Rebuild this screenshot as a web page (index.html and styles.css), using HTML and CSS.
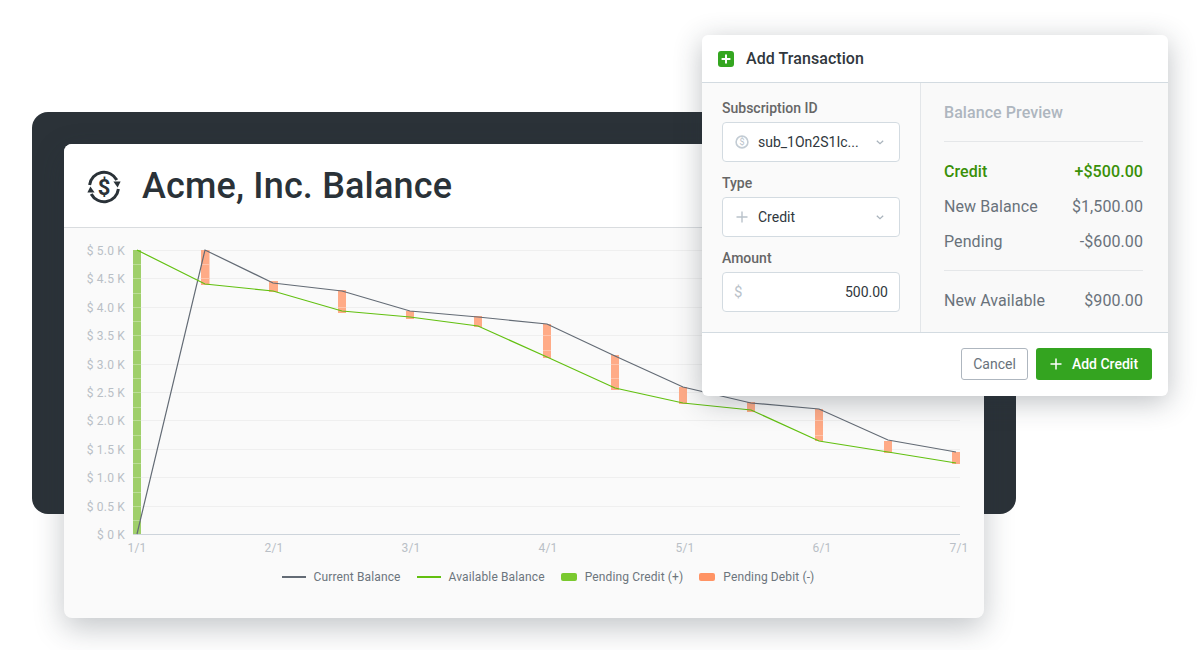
FILE: index.html
```html
<!DOCTYPE html>
<html>
  <head>
    <title>Acme, Inc. Balance</title>
    <meta name="viewport" content="width=device-width">
    <link rel="stylesheet" href="styles.css">
  </head>
  <body>
    <div class="stage">
      <div class="panel">
        <div class="card">
          <div class="card-head">
            <svg class="head-icon" width="34" height="34" viewBox="0 0 34 34">
              <path class="ring" d="M2.6 15A14.5 14.5 0 0 1 29.8 10"/>
              <path class="ring" d="M31.4 19A14.5 14.5 0 0 1 4.2 24"/>
              <polygon class="ring-head" points="26.4,11.6 33.6,11.6 30.6,17.4"/>
              <polygon class="ring-head" points="0.4,22.4 7.6,22.4 3.4,16.6"/>
              <text class="ring-sign" x="17" y="24.6">$</text>
            </svg>
            <h1>Acme, Inc. Balance</h1>
          </div>
          <div class="card-body">
            <svg class="chart" width="920" height="328" viewBox="64 228 920 328">
              <g class="grid">
                <line x1="133" x2="960" y1="250.5" y2="250.5"/>
                <line x1="133" x2="960" y1="278.5" y2="278.5"/>
                <line x1="133" x2="960" y1="307.5" y2="307.5"/>
                <line x1="133" x2="960" y1="335.5" y2="335.5"/>
                <line x1="133" x2="960" y1="364.5" y2="364.5"/>
                <line x1="133" x2="960" y1="392.5" y2="392.5"/>
                <line x1="133" x2="960" y1="420.5" y2="420.5"/>
                <line x1="133" x2="960" y1="449.5" y2="449.5"/>
                <line x1="133" x2="960" y1="477.5" y2="477.5"/>
                <line x1="133" x2="960" y1="506.5" y2="506.5"/>
              </g>
              <line class="axis" x1="133" x2="960" y1="534.5" y2="534.5"/>
              <g class="y-labels">
                <text x="125" y="255">$ 5.0 K</text>
                <text x="125" y="283">$ 4.5 K</text>
                <text x="125" y="312">$ 4.0 K</text>
                <text x="125" y="340">$ 3.5 K</text>
                <text x="125" y="369">$ 3.0 K</text>
                <text x="125" y="397">$ 2.5 K</text>
                <text x="125" y="425">$ 2.0 K</text>
                <text x="125" y="454">$ 1.5 K</text>
                <text x="125" y="482">$ 1.0 K</text>
                <text x="125" y="511">$ 0.5 K</text>
                <text x="125" y="539">$ 0 K</text>
              </g>
              <g class="x-labels">
                <text x="137" y="552">1/1</text>
                <text x="274" y="552">2/1</text>
                <text x="411" y="552">3/1</text>
                <text x="548" y="552">4/1</text>
                <text x="685" y="552">5/1</text>
                <text x="822" y="552">6/1</text>
                <text x="959" y="552">7/1</text>
              </g>
              <rect class="bar-credit" x="133" y="250" width="8" height="284"/>
              <g class="bar-debit">
                <rect x="201" y="250" width="8.5" height="35"/>
                <rect x="269" y="281" width="9" height="11"/>
                <rect x="338" y="290" width="8" height="23"/>
                <rect x="406" y="311" width="8" height="8"/>
                <rect x="474" y="316" width="8" height="11"/>
                <rect x="543" y="324" width="8" height="34"/>
                <rect x="611" y="355" width="8" height="35"/>
                <rect x="679" y="387" width="8" height="17"/>
                <rect x="747" y="402" width="8" height="10"/>
                <rect x="815" y="409" width="8" height="32"/>
                <rect x="884" y="441" width="8" height="12"/>
                <rect x="952" y="452" width="8" height="12"/>
              </g>
              <path class="bar-lines" d="M133 264.5h8M133 278.5h8M133 293.5h8M133 307.5h8M133 321.5h8M133 335.5h8M133 350.5h8M133 364.5h8M133 378.5h8M133 392.5h8M133 407.5h8M133 420.5h8M133 435.5h8M133 449.5h8M133 463.5h8M133 477.5h8M133 492.5h8M133 506.5h8M133 520.5h8M201 264.5h8M201 278.5h8M338 307.5h8M543 335.5h8M543 350.5h8M611 364.5h8M611 378.5h8M815 420.5h8M815 435.5h8"/>
              <polyline class="line-current" points="137,534 205,250 273,283 342,291 410,311 478,317 547,324 615,356 683,387 751,403 819,409 888,440 956,452"/>
              <polyline class="line-available" points="137,250 205,284 273,291 342,311 410,317 478,326 547,357 615,388 683,403 751,410 819,441 888,452 956,463"/>
            </svg>
            <div class="legend">
              <div class="legend-item"><span class="swatch swatch-current"></span>Current Balance</div>
              <div class="legend-item"><span class="swatch swatch-available"></span>Available Balance</div>
              <div class="legend-item"><span class="chip chip-credit"></span>Pending Credit (+)</div>
              <div class="legend-item"><span class="chip chip-debit"></span>Pending Debit (-)</div>
            </div>
          </div>
        </div>
      </div>

      <div class="modal">
        <div class="modal-head">
          <svg width="16" height="16" viewBox="0 0 16 16">
            <rect width="16" height="16" rx="3" fill="#34a620"/>
            <path d="M8 3.6v8.8M3.6 8h8.8" stroke="#fff" stroke-width="2"/>
          </svg>
          <span>Add Transaction</span>
        </div>
        <div class="modal-body">
          <div class="form-col">
            <label>Subscription ID</label>
            <div class="field">
              <svg class="field-icon" width="14" height="14" viewBox="0 0 14 14">
                <circle cx="7" cy="7" r="5.9" fill="none" stroke="#c3ccd4" stroke-width="1.6"/>
                <text class="coin-sign" x="7" y="10">$</text>
              </svg>
              <span class="field-text">sub_1On2S1Ic...</span>
              <svg class="chevron" width="8" height="5" viewBox="0 0 8 5"><path d="M.8.8L4 3.8L7.2.8"/></svg>
            </div>
            <label>Type</label>
            <div class="field">
              <svg class="field-icon" width="14" height="14" viewBox="0 0 14 14"><path d="M7 1.5v11M1.5 7h11" stroke="#b9c2ca" stroke-width="1.4"/></svg>
              <span class="field-text">Credit</span>
              <svg class="chevron" width="8" height="5" viewBox="0 0 8 5"><path d="M.8.8L4 3.8L7.2.8"/></svg>
            </div>
            <label>Amount</label>
            <div class="field field-amount">
              <span class="dollar">$</span>
              <span class="amount">500.00</span>
            </div>
          </div>
          <div class="preview-col">
            <h2>Balance Preview</h2>
            <div class="preview-group">
              <div class="row row-credit"><span>Credit</span><span>+$500.00</span></div>
              <div class="row"><span>New Balance</span><span>$1,500.00</span></div>
              <div class="row"><span>Pending</span><span>-$600.00</span></div>
            </div>
            <div class="row row-total"><span>New Available</span><span>$900.00</span></div>
          </div>
        </div>
        <div class="modal-foot">
          <div class="btn btn-cancel">Cancel</div>
          <div class="btn btn-add">
            <svg width="12" height="12" viewBox="0 0 12 12"><path d="M6 .5v11M.5 6h11" stroke="#fff" stroke-width="1.5"/></svg>
            <span>Add Credit</span>
          </div>
        </div>
      </div>
    </div>
  </body>
</html>
```

FILE: styles.css
```css
* { margin: 0; padding: 0; box-sizing: border-box; }
body {
  font-family: Roboto, sans-serif;
  background-color: #fff;
  overflow: hidden;
}

.stage {
  position: relative;
  width: 1200px;
  height: 650px;
  padding: 112px 0 0 32px;
}

.panel {
  width: 984px;
  height: 402px;
  padding: 32px;
  background-color: #2b3238;
  border-radius: 16px;
}

.card {
  width: 920px;
  height: 474px;
  background-color: #fafafa;
  border-radius: 8px;
  box-shadow: 0 10px 30px rgba(40, 50, 60, .28);
  overflow: hidden;
}

.card-head {
  display: flex;
  align-items: center;
  gap: 21px;
  height: 84px;
  padding-left: 23px;
  background-color: #fff;
  border-bottom: 1px solid #d9dcdf;
}
.card-head h1 {
  font-size: 36px;
  font-weight: 500;
  letter-spacing: .17px;
  color: #2a3238;
}
.head-icon { flex: none; margin-top: 2px; }
.ring {
  fill: none;
  stroke: #2a3238;
  stroke-width: 3;
}
.ring-head { fill: #2a3238; }
.ring-sign {
  font-size: 22px;
  font-weight: 700;
  fill: #2a3238;
  text-anchor: middle;
}

.chart { display: block; }
.grid line { stroke: #efefef; }
.axis { stroke: #cdd4db; }
.y-labels text {
  font-size: 12px;
  letter-spacing: .2px;
  fill: #b9bfc6;
  text-anchor: end;
}
.x-labels text {
  font-size: 12px;
  letter-spacing: .2px;
  fill: #b9bfc6;
  text-anchor: middle;
}
.bar-credit { fill: #9fcf6a; }
.bar-debit rect { fill: #ffab87; }
.bar-lines {
  stroke: #fff;
  stroke-opacity: .3;
  fill: none;
}
.line-current {
  fill: none;
  stroke: #636b75;
  stroke-width: 1.2;
}
.line-available {
  fill: none;
  stroke: #62c010;
  stroke-width: 1.2;
}

.legend {
  display: flex;
  justify-content: center;
  gap: 16px;
  padding: 13px 0 0 48px;
}
.legend-item {
  display: flex;
  align-items: center;
  gap: 8px;
  font-size: 12px;
  line-height: 16px;
  letter-spacing: .13px;
  color: #6c757d;
}
.swatch {
  width: 24px;
  height: 2px;
}
.swatch-current { background-color: #636b75; }
.swatch-available { background-color: #62c010; }
.chip {
  width: 16px;
  height: 8px;
  border-radius: 2px;
}
.chip-credit { background-color: #7ac92f; }
.chip-debit { background-color: #ff9364; }

.modal {
  position: absolute;
  left: 702px;
  top: 35px;
  width: 466px;
  height: 361px;
  display: flex;
  flex-direction: column;
  background-color: #fff;
  border-radius: 6px;
  box-shadow: 0 6px 28px rgba(40, 50, 60, .3);
  overflow: hidden;
}

.modal-head {
  display: flex;
  align-items: center;
  gap: 12px;
  flex: none;
  height: 48px;
  padding-left: 16px;
  font-size: 16px;
  font-weight: 500;
  letter-spacing: .07px;
  color: #30373d;
  border-bottom: 1px solid #d3dbe1;
}

.modal-body {
  display: flex;
  flex: none;
  height: 250px;
  background-color: #f9f9f9;
  border-bottom: 1px solid #d3dbe1;
}

.form-col {
  width: 219px;
  padding: 17px 20px 0;
  border-right: 1px solid #e3e6e9;
  background-color: #fafafa;
}
.form-col label {
  display: block;
  height: 22px;
  font-size: 14px;
  line-height: 16px;
  font-weight: 500;
  color: #666;
}
.field {
  display: flex;
  align-items: center;
  width: 178px;
  height: 40px;
  margin-bottom: 13px;
  padding: 0 12px;
  background-color: #fff;
  border: 1px solid #d3dbe1;
  border-radius: 4px;
  font-size: 14px;
  color: #30373d;
}
.field-icon { flex: none; margin-right: 9px; }
.coin-sign {
  font-size: 9px;
  fill: #b9c2ca;
  text-anchor: middle;
}
.field-text { flex: 1; }
.chevron {
  flex: none;
  margin-right: 3px;
  fill: none;
  stroke: #a9b3bc;
  stroke-width: 1.2;
}
.field-amount { justify-content: space-between; padding: 0 11px; }
.dollar { font-size: 15px; color: #b9c2ca; }

.preview-col {
  flex: 1;
  padding: 20px 25px 0 23px;
  color: #69727b;
}
.preview-col h2 {
  height: 39px;
  font-size: 16px;
  line-height: 19px;
  font-weight: 500;
  letter-spacing: .07px;
  color: #aeb6bf;
  border-bottom: 1px solid #e5e7e9;
}
.preview-group {
  padding: 12px 0 11px;
  border-bottom: 1px solid #e5e7e9;
}
.row {
  display: flex;
  justify-content: space-between;
  align-items: center;
  height: 35px;
  font-size: 16px;
  letter-spacing: .08px;
}
.row-credit {
  font-weight: 500;
  color: #3a9008;
}
.row-total { margin-top: 12px; }

.modal-foot {
  display: flex;
  justify-content: flex-end;
  gap: 8px;
  padding: 15px 16px 0;
}
.btn {
  display: flex;
  align-items: center;
  justify-content: center;
  height: 32px;
  font-size: 14px;
  border-radius: 3px;
}
.btn-cancel {
  width: 67px;
  color: #69727b;
  background-color: #fff;
  border: 1px solid #aeb6bf;
}
.btn-add {
  width: 116px;
  gap: 10px;
  color: #fff;
  font-weight: 500;
  background-color: #34a420;
}
```
